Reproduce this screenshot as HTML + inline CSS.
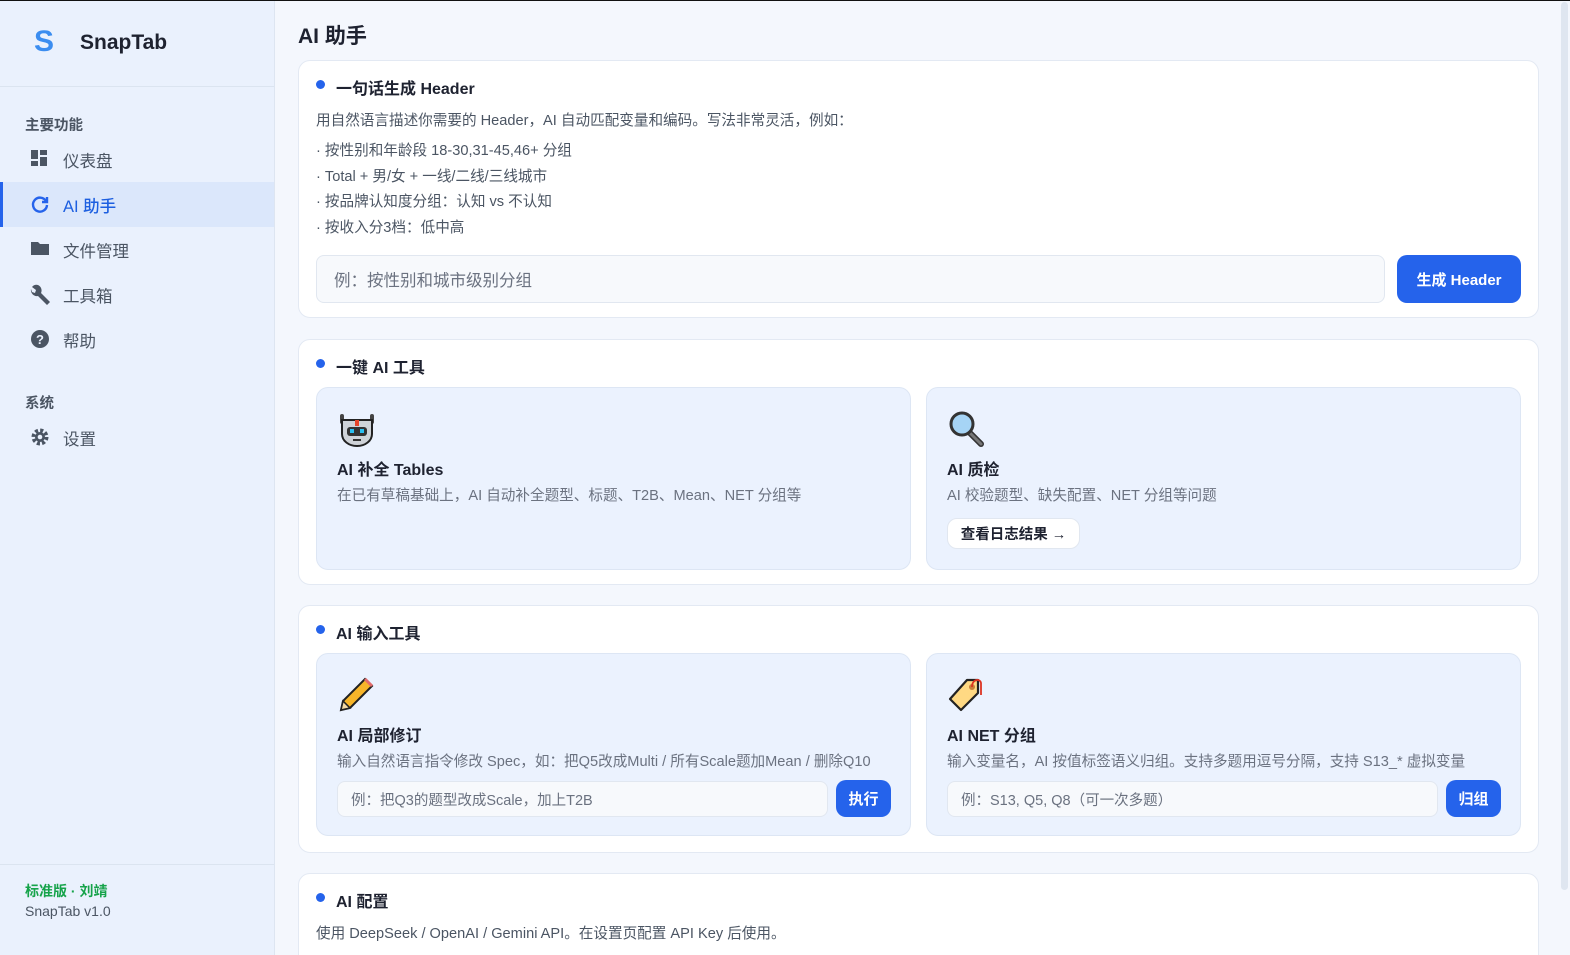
<!DOCTYPE html>
<html style="width:1570px;height:955px;overflow:hidden"><head><meta charset="utf-8"><style>
*{box-sizing:border-box;margin:0;padding:0}
body{width:1570px;height:955px;overflow:hidden;background:#f4f7fd;font-family:"Liberation Sans","Noto Sans CJK SC",sans-serif;color:#1f2937;position:relative;border-top:1px solid #111}
.side{position:absolute;left:0;top:0;width:275px;height:954px;background:#eaf1fd;border-right:1px solid #dde5f1}
.logo{position:absolute;left:34px;top:24px;font-size:30px;font-weight:bold;color:#3b8df0}
.brand{position:absolute;left:80px;top:30px;font-size:21px;font-weight:bold;color:#1e2230}
.hr{position:absolute;left:0;top:85px;width:274px;border-top:1px solid #dbe4f0}
.sec{position:absolute;left:25px;font-size:14.5px;font-weight:bold;color:#4b5563}
.item{position:absolute;left:0;width:274px;height:45px;display:flex;align-items:center;padding-left:63px;font-size:16.5px;color:#4b5563}
.item svg{position:absolute;left:30px;top:12px}
.item.act{background:#dbe7fb;color:#1d5fe0;font-weight:500}
.item.act:before{content:"";position:absolute;left:0;top:0;width:3px;height:45px;background:#2563eb}
.foot{position:absolute;left:25px;top:880px;font-size:14px}
h1{position:absolute;left:298px;top:19px;font-size:21px;font-weight:bold;color:#1e2230}
.card{position:absolute;left:298px;width:1241px;background:#fff;border:1px solid #e3e9f3;border-radius:12px;overflow:hidden}
.ct{position:absolute;left:17px;font-size:16px;font-weight:bold;color:#1e2230;padding-left:20px}
.ct:before{content:"";position:absolute;left:0;top:5px;width:9px;height:9px;border-radius:50%;background:#2563eb}
.txt{position:absolute;left:17px;font-size:14.6px;color:#4b5563;white-space:nowrap}
.sub{position:absolute;width:595px;height:183px;background:#ebf2fe;border:1px solid #dde6f4;border-radius:12px}
.sub .t{position:absolute;left:20px;top:68px;font-size:16px;font-weight:bold;color:#1e2230}
.sub .d{position:absolute;left:20px;top:96px;font-size:14.6px;color:#6b7280;white-space:nowrap}
.sub svg{position:absolute;left:20px;top:22px}
.inp{position:absolute;background:#f7f9fc;border:1px solid #e1e7f0;border-radius:8px;color:#6b7280;font-size:14.5px;display:flex;align-items:center;padding-left:13px}
.btn{position:absolute;background:#2563eb;color:#fff;font-weight:bold;border-radius:10px;display:flex;align-items:center;justify-content:center;font-size:15px}
</style></head><body>
<div class="side">
<div class="logo">S</div><div class="brand">SnapTab</div>
<div class="hr"></div>
<div class="sec" style="top:113px">主要功能</div>
<div class="item" style="top:136px"><svg width="18" height="18" viewBox="0 0 18 18" fill="#4b5563"><rect x="1" y="1" width="7" height="9"/><rect x="10" y="1" width="7" height="5"/><rect x="1" y="12" width="7" height="5"/><rect x="10" y="8" width="7" height="9"/></svg>仪表盘</div>
<div class="item act" style="top:181px"><svg width="20" height="20" viewBox="0 0 20 20" fill="none" stroke="#2563eb" stroke-width="2.4"><path d="M16 7A7 7 0 1 0 17 11"/><path d="M17 3v5h-5"/></svg>AI 助手</div>
<div class="item" style="top:226px"><svg width="20" height="18" viewBox="0 0 20 18" fill="#4b5563"><path d="M1 3h7l2 2h9v11H1z"/></svg>文件管理</div>
<div class="item" style="top:271px"><svg width="22" height="22" viewBox="0 0 22 22" fill="#4b5563"><path d="M8 1a6 6 0 0 0-6 2l4 3-1 3-3-1-1-3a6 6 0 0 0 7 7l9 9 3-3-9-9A6 6 0 0 0 8 1z"/></svg>工具箱</div>
<div class="item" style="top:316px"><svg width="20" height="20" viewBox="0 0 20 20"><circle cx="10" cy="10" r="9" fill="#4b5563"/><text x="10" y="15" font-size="13" font-weight="bold" fill="#eaf1fd" text-anchor="middle" font-family="Liberation Sans">?</text></svg>帮助</div>
<div class="sec" style="top:391px">系统</div>
<div class="item" style="top:414px"><svg width="20" height="20" viewBox="0 0 20 20"><circle cx="10" cy="10" r="6.5" fill="none" stroke="#4b5563" stroke-width="4" stroke-dasharray="3 2.1"/><circle cx="10" cy="10" r="5" fill="#4b5563"/><circle cx="10" cy="10" r="2.3" fill="#eaf1fd"/></svg>设置</div>
<div class="hr" style="top:863px"></div>
<div class="foot"><div style="color:#16a34a;font-weight:bold">标准版 · 刘靖</div><div style="color:#4b5563;margin-top:2px">SnapTab v1.0</div></div>
</div>

<h1>AI 助手</h1>

<div class="card" style="top:59px;height:258px">
<div class="ct" style="top:14px">一句话生成 Header</div>
<div class="txt" style="top:48px">用自然语言描述你需要的 Header，AI 自动匹配变量和编码。写法非常灵活，例如：</div>
<div class="txt" style="top:78px;line-height:25.7px;color:#4b5563">· 按性别和年龄段 18-30,31-45,46+ 分组<br>· Total + 男/女 + 一线/二线/三线城市<br>· 按品牌认知度分组：认知 vs 不认知<br>· 按收入分3档：低中高</div>
<div class="inp" style="left:17px;top:194px;width:1069px;height:48px;font-size:16.5px;padding-left:17px">例：按性别和城市级别分组</div>
<div class="btn" style="left:1098px;top:194px;width:124px;height:48px">生成 Header</div>
</div>

<div class="card" style="top:338px;height:246px">
<div class="ct" style="top:14px">一键 AI 工具</div>
<div class="sub" style="left:17px;top:47px">
<svg width="40" height="38" viewBox="0 0 40 38"><rect x="3" y="4" width="4" height="10" rx="2" fill="#444"/><rect x="33" y="4" width="4" height="10" rx="2" fill="#444"/><path d="M5 10h30v14c0 7-7 12-15 12S5 31 5 24z" fill="#cfd3d8" stroke="#222" stroke-width="2"/><rect x="18" y="10" width="4" height="6" fill="#e5452a"/><rect x="10" y="17" width="20" height="9" rx="3" fill="#333"/><rect x="13" y="19" width="4" height="4" fill="#2bc0f0"/><rect x="23" y="19" width="4" height="4" fill="#2bc0f0"/><rect x="16" y="29" width="8" height="2" fill="#333"/></svg>
<div class="t">AI 补全 Tables</div><div class="d">在已有草稿基础上，AI 自动补全题型、标题、T2B、Mean、NET 分组等</div></div>
<div class="sub" style="left:627px;top:47px">
<svg width="40" height="38" viewBox="0 0 40 38"><line x1="22" y1="22" x2="34" y2="34" stroke="#333" stroke-width="6" stroke-linecap="round"/><line x1="22" y1="22" x2="34" y2="34" stroke="#777" stroke-width="3" stroke-linecap="round"/><circle cx="15" cy="14" r="11" fill="#a6d4f5" stroke="#333" stroke-width="3"/></svg>
<div class="t">AI 质检</div><div class="d">AI 校验题型、缺失配置、NET 分组等问题</div>
<div style="position:absolute;left:20px;top:130px;width:133px;height:31px;background:#fff;border:1px solid #e1e7f0;border-radius:10px;font-size:14.5px;font-weight:bold;display:flex;align-items:center;justify-content:center;color:#1e2230">查看日志结果 →</div></div>
</div>

<div class="card" style="top:604px;height:248px">
<div class="ct" style="top:14px">AI 输入工具</div>
<div class="sub" style="left:17px;top:47px">
<svg width="40" height="38" viewBox="0 0 40 38"><path d="M4 34l2-9L28 3l7 7-22 22z" fill="#f7b529" stroke="#222" stroke-width="2"/><path d="M4 34l2-9 7 7z" fill="#f3d9a6" stroke="#222" stroke-width="1.5"/><path d="M28 3l7 7" stroke="#e26b6b" stroke-width="3"/></svg>
<div class="t">AI 局部修订</div><div class="d">输入自然语言指令修改 Spec，如：把Q5改成Multi / 所有Scale题加Mean / 删除Q10</div>
<div class="inp" style="left:20px;top:127px;width:491px;height:36px">例：把Q3的题型改成Scale，加上T2B</div>
<div class="btn" style="left:519px;top:126px;width:55px;height:37px">执行</div></div>
<div class="sub" style="left:627px;top:47px">
<svg width="40" height="38" viewBox="0 0 40 38"><path d="M20 4h11v13L14 34 3 23z" fill="#ffd983" stroke="#222" stroke-width="2.2" stroke-linejoin="round"/><circle cx="25" cy="11" r="3" fill="#c9803a"/><path d="M25 11c0-8 8-9 9-4v12" fill="none" stroke="#d32" stroke-width="1.8"/></svg>
<div class="t">AI NET 分组</div><div class="d">输入变量名，AI 按值标签语义归组。支持多题用逗号分隔，支持 S13_* 虚拟变量</div>
<div class="inp" style="left:20px;top:127px;width:491px;height:36px">例：S13, Q5, Q8（可一次多题）</div>
<div class="btn" style="left:519px;top:126px;width:55px;height:37px">归组</div></div>
</div>

<div class="card" style="top:872px;height:100px">
<div class="ct" style="top:14px">AI 配置</div>
<div class="txt" style="top:48px">使用 DeepSeek / OpenAI / Gemini API。在设置页配置 API Key 后使用。</div>
</div>

<div style="position:absolute;left:1560px;top:0;width:10px;height:955px;background:#f4f7fd"></div>
<div style="position:absolute;left:1561px;top:1px;width:7px;height:888px;background:#dfe6f0;border-radius:4px"></div>
</body></html>
